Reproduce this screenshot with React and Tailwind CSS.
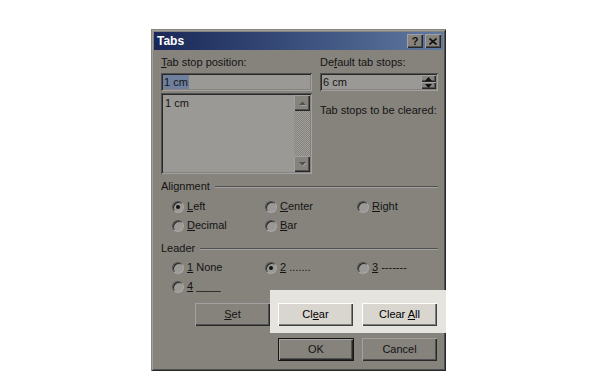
import React from "react";

const raised =
  "shadow-[inset_1px_1px_#a1a1a1,inset_-1px_-1px_#282828,inset_-2px_-2px_#515151]";
const raisedLit =
  "shadow-[inset_1px_1px_#ffffff,inset_-1px_-1px_#404040,inset_-2px_-2px_#808080]";
const sunken =
  "shadow-[inset_1px_1px_#515151,inset_-1px_-1px_#a1a1a1,inset_2px_2px_#282828,inset_-2px_-2px_#86837c]";

const Btn = ({ children, lit, isDefault, w = "w-[75px]" }) => {
  if (isDefault) {
    return (
      <div className={`${w} h-[23px] shrink-0 border border-[#141414]`}>
        <div className={`h-full flex items-center justify-center bg-[#86837c] ${raised}`}>
          <span>{children}</span>
        </div>
      </div>
    );
  }
  return (
    <div
      className={`${w} h-[23px] shrink-0 flex items-center justify-center ${
        lit ? `bg-[#d9d6cf] text-black ${raisedLit}` : `bg-[#86837c] ${raised}`
      }`}
    >
      <span className="whitespace-pre">{children}</span>
    </div>
  );
};

const Radio = ({ checked, children }) => (
  <div className="flex items-center h-[19px]">
    <div className="w-3 h-3 shrink-0 rounded-full border border-t-[#515151] border-l-[#515151] border-b-[#a8a8a8] border-r-[#a8a8a8] bg-[#9a9996] shadow-[inset_1px_1px_#282828] flex items-center justify-center">
      {checked && <div className="w-[4px] h-[4px] rounded-full bg-[#111]" />}
    </div>
    <span className="ml-[3px] whitespace-pre">{children}</span>
  </div>
);

const GroupHead = ({ children }) => (
  <div className="flex items-center h-[13px]">
    <span>{children}</span>
    <div className="flex-1 ml-[5px] h-[2px] border-t border-t-[#515151] border-b border-b-[#a1a1a1]" />
  </div>
);

const Arrow = ({ up, color = "#111" }) => (
  <svg width="7" height="4" viewBox="0 0 7 4">
    {up ? <polygon points="0,4 7,4 3.5,0" fill={color} /> : <polygon points="0,0 7,0 3.5,4" fill={color} />}
  </svg>
);

const ScrollBtn = ({ up }) => (
  <div className={`w-4 h-4 bg-[#86837c] ${raised} flex items-center justify-center`}>
    <svg width="9" height="6" viewBox="0 0 9 6">
      {up ? (
        <>
          <polygon points="1,5 8,5 4.5,1.5" fill="#a1a1a1" transform="translate(1,1)" />
          <polygon points="1,5 8,5 4.5,1.5" fill="#515151" />
        </>
      ) : (
        <>
          <polygon points="1,1 8,1 4.5,4.5" fill="#a1a1a1" transform="translate(1,1)" />
          <polygon points="1,1 8,1 4.5,4.5" fill="#515151" />
        </>
      )}
    </svg>
  </div>
);

export default function App() {
  return (
    <div className="min-h-screen bg-white font-['Liberation_Sans',Arial,sans-serif] text-[11px] leading-[13px] text-[#141414]">
      <div className="pl-[151px] pt-[29px]">
        <div className="w-[295px] h-[342px] bg-[#86837c] p-[3px] flex flex-col shadow-[inset_1px_1px_#86837c,inset_-1px_-1px_#282828,inset_2px_2px_#a1a1a1,inset_-2px_-2px_#515151]">
          {/* title bar */}
          <div className="h-[18px] flex items-center bg-gradient-to-r from-[#1a2857] to-[#6079a2] pl-[3px] pr-[2px]">
            <span className="text-white font-bold text-[12px]">Tabs</span>
            <div className="ml-auto flex gap-[2px]">
              <div className={`w-4 h-[14px] bg-[#86837c] ${raised} flex items-center justify-center font-bold text-[11px] leading-none text-[#111]`}>?</div>
              <div className={`w-4 h-[14px] bg-[#86837c] ${raised} flex items-center justify-center`}>
                <svg width="8" height="7" viewBox="0 0 8 7">
                  <path d="M0.5 0.5 L7.5 6.5 M7.5 0.5 L0.5 6.5" stroke="#111" strokeWidth="1.6" />
                </svg>
              </div>
            </div>
          </div>

          <div className="flex flex-col pl-[7px] pr-[4px] pt-[6px]">
            {/* top section */}
            <div className="flex gap-[8px]">
              <div className="w-[151px] flex flex-col">
                <div>
                  <u>T</u>ab stop position:
                </div>
                <div className={`mt-[4px] h-[18px] bg-[#9a9996] ${sunken} flex items-center pl-[2px]`}>
                  <span className="bg-[#6f7f9e] px-[1px] leading-[14px]">1 cm</span>
                </div>
                <div className={`mt-[2px] h-[81px] bg-[#9a9996] ${sunken} p-[2px] flex`}>
                  <div className="flex-1 pl-[2px] pt-[2px]">1 cm</div>
                  <div className="w-4 flex flex-col bg-[repeating-conic-gradient(#9f9e9a_0%_25%,#86837c_0%_50%)] bg-[length:2px_2px]">
                    <ScrollBtn up />
                    <div className="flex-1" />
                    <ScrollBtn />
                  </div>
                </div>
              </div>
              <div className="w-[118px] flex flex-col">
                <div>
                  De<u>f</u>ault tab stops:
                </div>
                <div className={`mt-[4px] h-[18px] bg-[#9a9996] ${sunken} flex items-center p-[2px]`}>
                  <span className="flex-1 pl-[1px]">6 cm</span>
                  <div className="w-[15px] h-full flex flex-col">
                    <div className={`flex-1 bg-[#86837c] ${raised} flex items-center justify-center`}>
                      <Arrow up />
                    </div>
                    <div className={`flex-1 bg-[#86837c] ${raised} flex items-center justify-center`}>
                      <Arrow />
                    </div>
                  </div>
                </div>
                <div className="mt-[13px]">Tab stops to be cleared:</div>
              </div>
            </div>

            {/* alignment */}
            <div className="mt-[6px] w-[277px]">
              <GroupHead>Alignment</GroupHead>
            </div>
            <div className="mt-[4px] pl-[11px] grid grid-cols-[93px_92px_auto]">
              <Radio checked>
                <u>L</u>eft
              </Radio>
              <Radio>
                <u>C</u>enter
              </Radio>
              <Radio>
                <u>R</u>ight
              </Radio>
              <Radio>
                <u>D</u>ecimal
              </Radio>
              <Radio>
                <u>B</u>ar
              </Radio>
            </div>

            {/* leader */}
            <div className="mt-[7px] w-[277px]">
              <GroupHead>Leader</GroupHead>
            </div>
            <div className="mt-[3px] pl-[11px] grid grid-cols-[93px_92px_auto]">
              <Radio>
                <u>1</u> None
              </Radio>
              <Radio checked>
                <u>2</u> .......
              </Radio>
              <Radio>
                <u>3</u> -------
              </Radio>
              <Radio>
                <u>4</u> ____
              </Radio>
            </div>

            {/* buttons */}
            <div className="-mt-[6px] flex items-start pl-[34px]">
              <div className="mt-[13px]">
                <Btn>
                  <u>S</u>et
                </Btn>
              </div>
              <div className="shrink-0 bg-[#e6e4df] pt-[13px] pl-[8px] pr-[9px] pb-[7px] flex gap-[9px] text-black">
                <Btn lit>
                  Cl<u>e</u>ar
                </Btn>
                <Btn lit>
                  Clear <u>A</u>ll
                </Btn>
              </div>
            </div>
            <div className="mt-[5px] flex pl-[117px] gap-[8px]">
              <Btn isDefault w="w-[76px]">OK</Btn>
              <Btn>Cancel</Btn>
            </div>
          </div>
        </div>
      </div>
    </div>
  );
}
